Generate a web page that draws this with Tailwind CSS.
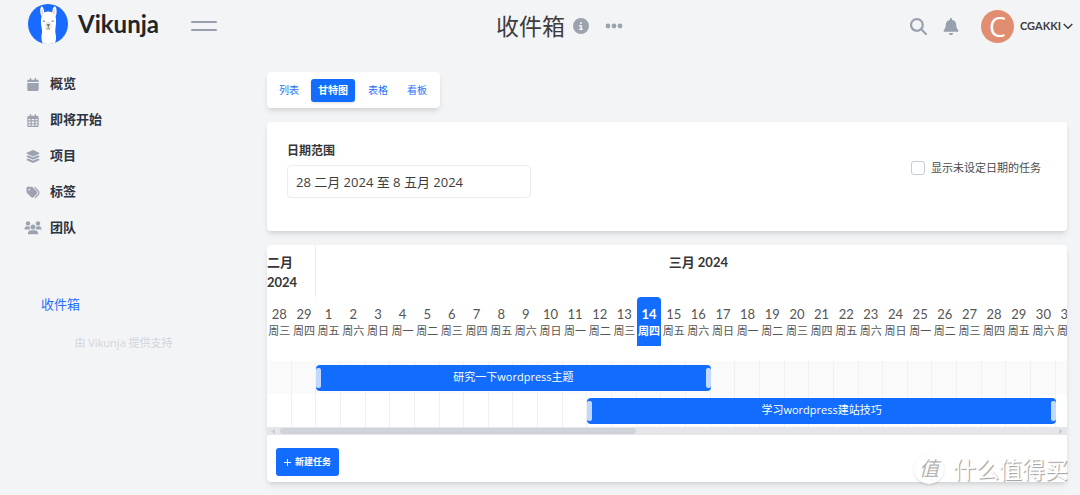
<!DOCTYPE html>
<html lang="zh-CN">
<head>
<meta charset="utf-8">
<title>收件箱 | Vikunja</title>
<script src="https://cdn.jsdelivr.net/npm/@tailwindcss/browser@4"></script>
</head>
<body class="relative min-h-screen overflow-x-hidden bg-[#f3f4f6] font-['Open_Sans','Noto_Sans_CJK_SC',sans-serif] text-[#4a4a4a]">
<header class="flex h-13 items-center pr-[7px] pl-7">
  <div class="flex shrink-0 items-center">
    <a href="#" class="mb-1 flex items-center gap-2.5 text-[#222629]" aria-label="Vikunja">
      <svg class="size-10" viewBox="0 0 40 40">
        <defs><clipPath id="disc"><circle cx="20" cy="20" r="20"/></clipPath></defs>
        <circle cx="20" cy="20" r="20" fill="#196aff"/>
        <g clip-path="url(#disc)">
          <path fill="#fff" d="M13.6 2.2c1.8.6 2.4 3.5 2.6 6.2 2.3-1.200 5.700-1.200 8 0 .2-2.700 1-5.600 2.700-6.200 2.100 1.500 2.300 6.500.7 10.400 .7 3 .5 7 .1 10-.5 3.600-.6 5.400.1 8.400.5 3 .2 6-1.300 9.500h-11.500c-1.600-4-1.900-7-1.300-10 .7-3.400.2-5-.3-8-.6-3.500-.7-7 .2-10-1.900-4-1.800-8.800 0-10.300z"/>
          <path fill="#e8c9c3" d="M14 4.500c.9 1.300 1.200 3.300 1.200 5l-1 1.500c-.9-2.300-.9-5-.2-6.500zM26.400 4.500c-.9 1.300-1.200 3.300-1.200 5l1 1.500c.9-2.300.9-5 .2-6.500z"/>
          <ellipse cx="20.300" cy="22" rx="3.400" ry="4.200" fill="#eee6dc"/>
          <path d="M18.500 20.200h3.600l-1.800 2.200z" fill="#5b5150"/>
          <path d="M20.300 22v2.200m-1.700 1c.9-.1 1.300-.3 1.700-1 .4.700.8.900 1.700 1" fill="none" stroke="#6d625e" stroke-width=".7"/>
          <path d="M14.900 17.400q1-1 2 0m6.800 0q1-1 2 0" fill="none" stroke="#4c4c50" stroke-width=".9"/>
        </g>
      </svg>
      <span class="w-[83px] font-['Lato'] text-2xl leading-8 font-bold">Vikunja</span>
    </a>
    <button class="ml-[30px] flex w-[26px] flex-col gap-[6px]" aria-label="菜单"><span class="h-[2px] w-full rounded bg-[#989fae]"></span><span class="h-[2px] w-full rounded bg-[#989fae]"></span></button>
  </div>
  <div class="flex flex-1 items-center justify-center">
    <h1 class="text-[23px] leading-8 font-normal text-[#3d3d3d]">收件箱</h1>
    <button class="ml-2 text-[#9ca3af]" aria-label="详情"><svg class="size-4" viewBox="0 0 512 512" fill="currentColor"><path d="M256 512A256 256 0 1 0 256 0a256 256 0 1 0 0 512zM216 336h24V272H216c-13.300 0-24-10.700-24-24s10.700-24 24-24h48c13.300 0 24 10.700 24 24v88h8c13.300 0 24 10.700 24 24s-10.700 24-24 24H216c-13.300 0-24-10.700-24-24s10.700-24 24-24zm40-208a32 32 0 1 1 0 64 32 32 0 1 1 0-64z"/></svg></button>
    <button class="ml-4 text-[#9ca3af]" aria-label="更多"><svg class="h-4 w-[18px]" viewBox="0 0 18 16" fill="currentColor"><circle cx="3" cy="8" r="2.400"/><circle cx="9" cy="8" r="2.400"/><circle cx="15" cy="8" r="2.400"/></svg></button>
  </div>
  <div class="flex shrink-0 items-center pl-2 text-[#989fae]">
    <button aria-label="搜索"><svg class="size-[17px]" viewBox="0 0 512 512" fill="currentColor"><path d="M416 208c0 45.900-14.900 88.300-40 122.700L502.600 457.400c12.500 12.500 12.500 32.800 0 45.300s-32.800 12.500-45.300 0L330.700 376c-34.400 25.200-76.800 40-122.700 40C93.100 416 0 322.900 0 208S93.100 0 208 0S416 93.100 416 208zM208 352a144 144 0 1 0 0-288 144 144 0 1 0 0 288z"/></svg></button>
    <button class="ml-4" aria-label="通知"><svg class="h-[17px] w-4" viewBox="0 0 448 512" fill="currentColor"><path d="M224 0c-17.700 0-32 14.300-32 32V51.200C119 66 64 130.600 64 208v18.800c0 47-17.300 92.400-48.500 127.600l-7.400 8.300c-8.400 9.400-10.400 22.900-5.300 34.400S19.400 416 32 416H416c12.600 0 24-7.400 29.200-18.900s3.100-25-5.300-34.400l-7.400-8.300C401.300 319.200 384 273.900 384 226.800V208c0-77.400-55-142-128-156.800V32c0-17.700-14.300-32-32-32zm45.300 493.300c12-12 18.700-28.300 18.700-45.300H224 160c0 17 6.700 33.300 18.700 45.300s28.300 18.700 45.300 18.700s33.300-6.700 45.300-18.700z"/></svg></button>
    <button class="ml-[22px] flex items-center text-[#3d3d3d]">
      <span class="flex size-[33px] items-center justify-center rounded-full bg-[#e08e6f] text-[27px] leading-none text-white">C</span>
      <span class="ml-1.5 font-['Lato'] text-[11px] font-bold">CGAKKI</span>
      <svg class="ml-0.5 h-3 w-[10px]" viewBox="0 0 10 12" fill="none" stroke="currentColor" stroke-width="1.500"><path d="M.7 4 5 8.300 9.300 4"/></svg>
    </button>
  </div>
</header>

<div class="flex">
  <aside class="w-[267px] shrink-0 pt-3.5">
    <nav>
      <ul class="text-[13px] font-bold text-[#2c3444]">
        <li><a href="#" class="flex h-9 items-center pl-6"><svg class="h-[13px] w-[18px] text-[#9ca3af]" viewBox="0 0 448 512" fill="currentColor"><path d="M96 32V64H48C21.500 64 0 85.500 0 112v48H448V112c0-26.500-21.500-48-48-48H352V32c0-17.700-14.300-32-32-32s-32 14.300-32 32V64H160V32c0-17.700-14.300-32-32-32S96 14.300 96 32zM448 192H0V464c0 26.500 21.500 48 48 48H400c26.500 0 48-21.500 48-48V192z"/></svg><span class="ml-2">概览</span></a></li>
        <li><a href="#" class="flex h-9 items-center pl-6"><svg class="h-[13px] w-[18px] text-[#9ca3af]" viewBox="0 0 448 512" fill="currentColor"><path d="M152 24c0-13.300-10.700-24-24-24s-24 10.700-24 24V64H64C28.700 64 0 92.700 0 128v16 48V448c0 35.300 28.700 64 64 64H384c35.300 0 64-28.700 64-64V192 144 128c0-35.300-28.700-64-64-64H344V24c0-13.300-10.700-24-24-24s-24 10.700-24 24V64H152V24zM48 192h80v56H48V192zm0 104h80v64H48V296zm128 0h96v64H176V296zm144 0h80v64H320V296zm80-48H320V192h80v56zm0 160v40c0 8.800-7.200 16-16 16H320V408h80zm-128 0v56H176V408h96zm-144 0v56H64c-8.800 0-16-7.200-16-16V408h80zM272 248H176V192h96v56z"/></svg><span class="ml-2">即将开始</span></a></li>
        <li><a href="#" class="flex h-9 items-center pl-6"><svg class="h-[13px] w-[18px] text-[#9ca3af]" viewBox="0 0 576 512" fill="currentColor"><path d="M264.500 5.200c14.900-6.900 32.100-6.900 47 0l218.600 101c8.500 3.900 13.900 12.400 13.900 21.800s-5.400 17.900-13.900 21.800l-218.600 101c-14.900 6.900-32.100 6.900-47 0L45.900 149.800C37.400 145.800 32 137.300 32 128s5.400-17.900 13.900-21.800L264.500 5.200zM476.900 209.600l53.200 24.600c8.500 3.900 13.900 12.400 13.900 21.800s-5.400 17.900-13.900 21.800l-218.600 101c-14.900 6.900-32.100 6.900-47 0L45.900 277.800C37.400 273.800 32 265.300 32 256s5.400-17.900 13.900-21.800l53.200-24.600 152 70.200c23.400 10.800 50.400 10.800 73.800 0l152-70.200zm-152 198.200l152-70.200 53.200 24.600c8.500 3.900 13.900 12.400 13.900 21.800s-5.400 17.900-13.900 21.800l-218.600 101c-14.900 6.900-32.100 6.900-47 0L45.900 405.800C37.400 401.800 32 393.300 32 384s5.400-17.900 13.900-21.800l53.200-24.600 152 70.200c23.400 10.800 50.400 10.800 73.800 0z"/></svg><span class="ml-2">项目</span></a></li>
        <li><a href="#" class="flex h-9 items-center pl-6"><svg class="h-[13px] w-[18px] text-[#9ca3af]" viewBox="0 0 512 512" fill="currentColor"><path d="M345 39.100L472.800 168.400c52.400 53 52.400 138.200 0 191.200L360.800 472.900c-9.300 9.400-24.500 9.500-33.900 .2s-9.500-24.500-.2-33.900L438.600 325.900c33.900-34.300 33.900-89.400 0-123.700L310.900 72.900c-9.300-9.400-9.200-24.600 .2-33.900s24.600-9.200 33.900 .2zM0 229.500V80C0 53.500 21.500 32 48 32H197.500c17 0 33.300 6.700 45.300 18.700l168 168c25 25 25 65.500 0 90.500L277.300 442.700c-25 25-65.500 25-90.500 0l-168-168C6.700 262.700 0 246.500 0 229.500zM144 144a32 32 0 1 0 -64 0 32 32 0 1 0 64 0z"/></svg><span class="ml-2">标签</span></a></li>
        <li><a href="#" class="flex h-9 items-center pl-6"><svg class="h-[14px] w-[18px] text-[#9ca3af]" viewBox="0 0 18 14" fill="currentColor"><circle cx="4" cy="2.400" r="2.200"/><circle cx="14" cy="2.400" r="2.200"/><circle cx="9" cy="5.900" r="2.500"/><path d="M.5 8.500c0-2 1-3.200 3-3.200 .9 0 1.700.1 2.200.4-.2 1.200.1 2.100.8 2.800zM17.500 8.500c0-2-1-3.200-3-3.200-.9 0-1.700.1-2.200.4.200 1.200-.1 2.100-.8 2.800zM3.800 13.300c0-2.800 1.400-4.100 3.500-4.100h3.400c2.100 0 3.500 1.300 3.500 4.100z"/></svg><span class="ml-2">团队</span></a></li>
      </ul>
      <a href="#" class="mt-[41px] ml-[41px] flex h-9 items-center text-[13px] text-[#1f6fff]">收件箱</a>
    </nav>
    <a href="#" class="mt-3 flex justify-center pr-5 text-[11px] leading-4 text-[#d1d5db]">由 Vikunja 提供支持</a>
  </aside>

  <main class="min-w-0 flex-1 pt-5 pr-[13px]">
    <nav class="flex h-9 w-fit items-center rounded-sm bg-white px-[6px] text-[10px] text-[#1f6fff] shadow-md shadow-black/10">
      <a href="#" class="px-1.5">列表</a>
      <a href="#" class="mx-[6px] rounded-[3px] bg-[#126dff] px-[7px] py-1 leading-[15px] font-bold text-white shadow" aria-current="page">甘特图</a>
      <a href="#" class="px-[7px]">表格</a>
      <a href="#" class="ml-[5px] px-[7px]">看板</a>
    </nav>

    <section class="mt-3.5 flex h-[109px] justify-between rounded-sm bg-white px-5 pt-[19px] shadow-md shadow-black/10">
      <div>
        <label for="range" class="block text-xs leading-5 font-bold text-[#363636]">日期范围</label>
        <input id="range" type="text" value="28 二月 2024 至 8 五月 2024" class="mt-1 h-[33px] w-[244px] rounded-sm border border-[#ebecef] bg-white px-2 text-[13px] text-[#3d3d3d]">
      </div>
      <label class="mt-[17px] flex h-5 items-center gap-1.5 pr-1.5 text-[11px]"><input type="checkbox" class="size-3.5 appearance-none rounded-[3px] border border-[#c3cbd8] bg-white">显示未设定日期的任务</label>
    </section>

    <section class="mt-3.5 rounded-sm bg-white shadow-md shadow-black/10">
      <div class="overflow-hidden rounded-t-sm">
        <div class="w-[1750px]">
          <div class="grid h-13 grid-cols-[repeat(71,minmax(0,1fr))] font-['Lato','Noto_Sans_CJK_SC',sans-serif] text-[13px] leading-5 font-bold text-[#363636]">
            <div class="col-span-2 border-r border-[#ebecef] pt-[7px]">二月<br>2024</div>
            <div class="col-span-31 pt-[7px] text-center">三月 2024</div>
          </div>
          <div id="days" class="mb-[15px] grid h-[49px] grid-cols-[repeat(71,minmax(0,1fr))] text-center"></div>
          <div class="grid h-[33px] grid-cols-[repeat(71,minmax(0,1fr))] bg-[#fafafa]" data-cells>
            <div class="z-10 col-start-3 col-end-19 row-start-1 my-auto flex h-[26px] items-center justify-between rounded bg-[#126dff] text-[11px] text-white"><i class="h-5 w-[5px] rounded-xs bg-[#c3d8ff]"></i>研究一下wordpress主题<i class="h-5 w-[5px] rounded-xs bg-[#c3d8ff]"></i></div>
          </div>
          <div class="grid h-[33px] grid-cols-[repeat(71,minmax(0,1fr))]" data-cells>
            <div class="z-10 col-start-14 col-end-33 row-start-1 my-auto flex h-[26px] items-center justify-between rounded bg-[#126dff] text-[11px] text-white"><i class="h-5 w-[5px] rounded-xs bg-[#c3d8ff]"></i>学习wordpress建站技巧<i class="h-5 w-[5px] rounded-xs bg-[#c3d8ff]"></i></div>
          </div>
        </div>
        <div class="flex h-2 items-center justify-between bg-[#e4e6ea] px-1">
          <svg class="h-[5px] w-1" viewBox="0 0 4 5" fill="#c9cdd4"><path d="M4 0v5L0 2.500z"/></svg>
          <div class="mx-[5px] h-full flex-1 py-px"><div class="h-full w-[46%] rounded-full bg-[#d0d3d9]"></div></div>
          <svg class="h-[5px] w-1" viewBox="0 0 4 5" fill="#c9cdd4"><path d="M0 0v5l4-2.500z"/></svg>
        </div>
      </div>
      <div class="px-[9px] pt-[13px] pb-1.5">
        <button class="flex h-7 items-center gap-1 rounded-[3px] bg-[#126dff] px-2 text-[9px] font-bold text-white"><svg class="size-[7px]" viewBox="0 0 7 7" stroke="currentColor"><path d="M3.500 0v7M0 3.500h7"/></svg>新建任务</button>
      </div>
    </section>
  </main>
</div>

<div class="pointer-events-none absolute right-3 bottom-2.5 z-20 flex items-center gap-[9px] text-white">
  <span class="flex size-[30px] items-center justify-center rounded-full bg-white text-xl leading-none font-normal text-[#b4b4b4] italic shadow">值</span>
  <span class="text-[23px] leading-8 text-shadow-[1px_1px_1px_#999999]">什么值得买</span>
</div>

<script>
const week = ['日', '一', '二', '三', '四', '五', '六'];
const days = document.getElementById('days');
const start = new Date(2024, 1, 28);
for (let i = 0; i < 33; i++) {
  const d = new Date(start.getFullYear(), start.getMonth(), start.getDate() + i);
  const today = d.getMonth() === 2 && d.getDate() === 14;
  const cell = document.createElement('div');
  cell.className = today ? 'rounded-t bg-[#126dff] pt-2 font-bold text-white' : 'pt-2 text-[#555555]';
  cell.innerHTML = `<div class="font-['Lato'] text-[13px] leading-[18px]">${d.getDate()}</div><div class="text-[11px] leading-4 whitespace-nowrap">周${week[d.getDay()]}</div>`;
  days.append(cell);
}
document.querySelectorAll('[data-cells]').forEach(row => {
  for (let i = 1; i <= 33; i++) {
    const cell = document.createElement('div');
    cell.className = 'row-start-1 border-r border-[#eff0f2]';
    cell.style.gridColumn = i;
    row.append(cell);
  }
});
</script>
</body>
</html>
